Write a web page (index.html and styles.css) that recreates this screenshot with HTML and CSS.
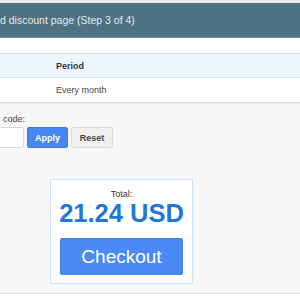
FILE: index.html
```html
<!DOCTYPE html>
<html lang="en">
<head>
  <meta charset="UTF-8" />
  <meta name="viewport" content="width=device-width, initial-scale=1.0" />
  <title>Add discount page</title>
  <link rel="stylesheet" href="styles.css">
</head>
<body>
  <div class="top-strip"></div>
  <div class="step-bar">d discount page (Step 3 of 4)</div>

  <div class="plan-table">
    <div class="plan-head">
      <span class="plan-cell">Period</span>
    </div>
    <div class="plan-row">
      <span class="plan-cell">Every month</span>
    </div>
  </div>

  <div class="checkout-area">
    <label class="code-label">code:</label>
    <div class="code-row">
      <input type="text" class="code-input" />
      <button class="btn-apply">Apply</button>
      <button class="btn-reset">Reset</button>
    </div>

    <div class="total-box">
      <div class="total-label">Total:</div>
      <div class="total-value">21.24 USD</div>
      <button class="btn-checkout">Checkout</button>
    </div>
  </div>

  <div class="page-foot"></div>
</body>
</html>
```

FILE: styles.css
```css
body {
  margin: 0;
  font-family: "Liberation Sans", Arial, sans-serif;
  background: white;
  color: #333;
  overflow: hidden;
}

.top-strip {
  height: 3px;
  background: #ebebeb;
}

.step-bar {
  height: 35px;
  line-height: 35px;
  background: #4e7282;
  color: #e2e9ed;
  font-size: 10.5px;
  white-space: nowrap;
  border-bottom: 1px solid #6d8c99;
  box-sizing: border-box;
}

.plan-table {
  margin-top: 15px;
}

.plan-head {
  height: 25px;
  line-height: 24px;
  background: #eef6fd;
  border-top: 1px solid #dcdcdc;
  border-bottom: 1px solid #cfe3f6;
  box-sizing: border-box;
  font-weight: bold;
  font-size: 9px;
  color: #333;
}

.plan-row {
  height: 25px;
  line-height: 25px;
  background: white;
  border-bottom: 1px solid #dedede;
  box-sizing: border-box;
  font-size: 9px;
  color: #444;
}

.plan-cell {
  padding-left: 56px;
}

.checkout-area {
  background: #f7f7f7;
  padding: 10px 0 9px 0;
  border-bottom: 1px solid #dcdcdc;
  border-top: 1px solid #ececec;
}

.code-label {
  display: block;
  padding-left: 3px;
  font-size: 9px;
  line-height: 11px;
  color: #444;
}

.code-row {
  display: flex;
  gap: 3px;
  margin-top: 2px;
  height: 21px;
}

.code-input {
  width: 30px;
  margin: 0 0 0 -6px;
  padding: 0;
  border: 1px solid #d9d9d9;
  border-radius: 2px;
  background: white;
  box-sizing: border-box;
}

.btn-apply,
.btn-reset {
  margin: 0;
  padding: 0;
  font-family: "Liberation Sans", Arial, sans-serif;
  font-weight: bold;
  font-size: 9px;
  border-radius: 2px;
  box-sizing: border-box;
  cursor: pointer;
}

.btn-apply {
  width: 41px;
  background: #4787f3;
  color: white;
  border: 1px solid #3f7be6;
}

.btn-reset {
  width: 42px;
  background: #efefef;
  color: #444;
  border: 1px solid #dcdcdc;
}

.total-box {
  width: 143px;
  margin: 31px 0 0 50px;
  padding: 9px 9px 8px 9px;
  background: white;
  border: 1px solid #cde4f8;
  box-sizing: border-box;
  text-align: center;
}

.total-label {
  font-size: 9px;
  line-height: 10px;
  color: #333;
}

.total-value {
  font-size: 25.5px;
  line-height: 28px;
  font-weight: bold;
  color: #1f77dc;
  white-space: nowrap;
  margin: 0 -6px;
}

.btn-checkout {
  display: block;
  width: 123px;
  height: 37px;
  margin-top: 11px;
  padding: 0;
  background: #4a8af5;
  color: white;
  border: 1px solid #4382ec;
  border-radius: 2px;
  font-family: "Liberation Sans", Arial, sans-serif;
  font-size: 19px;
  line-height: 35px;
  cursor: pointer;
}

.page-foot {
  height: 20px;
  background: white;
}
```
